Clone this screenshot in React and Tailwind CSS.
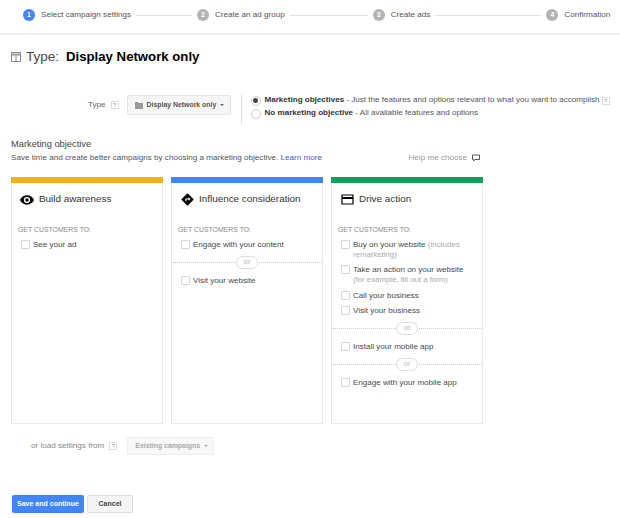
import React from "react";

function Step({ n, label, active }) {
  return (
    <div className="flex items-center shrink-0">
      <span className={`w-[12px] h-[12px] rounded-full flex items-center justify-center text-white text-[7px] font-bold ${active ? "bg-[#4285f4]" : "bg-[#b3b3b3]"}`}>{n}</span>
      <span className="ml-[6px] text-[8.1px] text-[#555] whitespace-nowrap">{label}</span>
    </div>
  );
}

function Line({ w }) {
  return <div className={`h-px bg-[#e3e3e3] ml-[5px] mr-[5px] ${w}`} />;
}

function Help({ className = "" }) {
  return <span className={`inline-flex items-center justify-center w-[8px] h-[8px] border border-[#ddd] text-[6px] leading-none text-[#999] ${className}`}>?</span>;
}

function Check({ label, note, note2, tall }) {
  return (
    <div className={`flex items-start pl-[9px] ${tall ? "mb-[5px]" : "mb-[4px]"}`}>
      <span className="w-[9px] h-[9px] mt-[1px] border border-[#d5d5d5] rounded-[1px] bg-white shrink-0" />
      <div className="ml-[3px] text-[8.05px] leading-[11px] text-[#4a4a4a]">
        <div>
          {label}
          {note && <span className="text-[#aaa]"> {note}</span>}
        </div>
        {note2 && <div className="text-[#aaa] text-[7.8px] leading-[10px]">{note2}</div>}
      </div>
    </div>
  );
}

function Or() {
  return (
    <div className="relative h-[16px] flex items-center justify-center mb-[5px]">
      <div className="absolute left-0 right-0 top-[8px] border-t border-dotted border-[#ccc]" />
      <span className="relative bg-white border border-[#ddd] rounded-full w-[22px] h-[13px] flex items-center justify-center text-[8px] text-[#bbb]">or</span>
    </div>
  );
}

function Card({ bar, icon, title, children }) {
  return (
    <div className="w-[152px] h-[247px] border border-[#e8e8e8] border-t-0 bg-white">
      <div className={`h-[6px] -mx-px ${bar}`} />
      <div className="flex items-center h-[33px] pl-[8px]">
        <span className="w-[14px] h-[14px] flex items-center justify-center text-black">{icon}</span>
        <span className="ml-[5px] text-[9.9px] text-[#333] whitespace-nowrap">{title}</span>
      </div>
      <div className="mt-[9px] pl-[6px] text-[6.9px] leading-[10px] text-[#888]">GET CUSTOMERS TO:</div>
      <div className="mt-[4px]">{children}</div>
    </div>
  );
}

const Eye = (
  <svg width="14" height="10" viewBox="0 0 24 16"><path fill="#000" d="M12 0C6.5 0 2 3.3 0 8c2 4.700 6.500 8 12 8s10-3.300 12-8c-2-4.700-6.500-8-12-8zm0 13.300A5.300 5.300 0 1 1 12 2.700a5.300 5.300 0 0 1 0 10.600zM12 5a3 3 0 1 0 0 6 3 3 0 0 0 0-6z" /></svg>
);
const Diamond = (
  <svg width="13" height="13" viewBox="0 0 24 24"><path fill="#000" d="M22.700 10.900 13.100 1.300a1.500 1.500 0 0 0-2.200 0l-9.600 9.600a1.500 1.500 0 0 0 0 2.200l9.600 9.600a1.500 1.500 0 0 0 2.200 0l9.600-9.600a1.500 1.500 0 0 0 0-2.200zM14 14.500V12h-4v3H8v-4a1 1 0 0 1 1-1h5V7.500l3.500 3.500z" /></svg>
);
const CardIcon = (
  <svg width="13" height="11" viewBox="0 0 13 11"><path fill="none" stroke="#000" strokeWidth="1.200" d="M1 1h11v9H1z" /><path fill="#000" d="M1 3h11v2H1z" /></svg>
);

export default function App() {
  return (
    <div className="w-[620px] h-[518px] bg-white overflow-hidden font-['Liberation_Sans',Arial,sans-serif]">
      <div className="h-[35px] border-b-2 border-[#f0f0f0] flex items-center pl-[23px] pb-[3px]">
        <Step n="1" label="Select campaign settings" active />
        <Line w="w-[56px]" />
        <Step n="2" label="Create an ad group" />
        <Line w="w-[78px]" />
        <Step n="3" label="Create ads" />
        <Line w="w-[106px]" />
        <Step n="4" label="Confirmation" />
      </div>

      <div className="flex items-center mt-[13px] ml-[11px] h-[18px]">
        <svg width="10" height="10" viewBox="0 0 10 10" className="shrink-0">
          <path fill="#ccc" d="M1 1h8v2H1z" />
          <path fill="none" stroke="#888" d="M.5.5h9v9h-9zM.5 3h9M5 3v6.500" />
        </svg>
        <span className="ml-[5px] text-[13.5px] text-[#444]">Type:</span>
        <span className="ml-[7px] text-[13.2px] font-bold text-black">Display Network only</span>
      </div>

      <div className="flex items-start mt-[29px]">
        <div className="flex items-center h-[20px] ml-[88px]">
          <span className="text-[8.1px] text-[#666]">Type</span>
          <Help className="ml-[5px]" />
          <div className="ml-[8px] w-[104px] h-[20px] bg-[#f5f5f5] border border-[#e5e5e5] rounded-[2px] flex items-center pl-[7px]">
            <svg width="8" height="7" viewBox="0 0 8 7" className="shrink-0"><path fill="#999" d="M0 0h3v1h5v6H0z" /></svg>
            <span className="ml-[4px] text-[6.9px] font-bold text-[#555] whitespace-nowrap">Display Network only</span>
            <span className="ml-[4px] border-x-[2px] border-x-transparent border-t-[2px] border-t-[#666]" />
          </div>
        </div>
        <div className="ml-[10px] w-px h-[29px] bg-[#ddd]" />
        <div className="ml-[9px] -mt-[1px] text-[8.05px] text-[#555]">
          <div className="flex items-center h-[13px]">
            <span className="w-[10px] h-[10px] rounded-full border border-[#ccc] flex items-center justify-center shrink-0">
              <span className="w-[5px] h-[5px] rounded-full bg-[#444]" />
            </span>
            <span className="ml-[4px] whitespace-nowrap"><b className="text-[#333]">Marketing objectives</b> - Just the features and options relevant to what you want to accomplish</span>
            <Help className="ml-[2px] shrink-0" />
          </div>
          <div className="flex items-center h-[13px]">
            <span className="w-[10px] h-[10px] rounded-full border border-[#ccc] shrink-0" />
            <span className="ml-[4px] whitespace-nowrap"><b className="text-[#333]">No marketing objective</b> - All available features and options</span>
          </div>
        </div>
      </div>

      <div className="ml-[11px] mt-[14px] text-[9.3px] leading-[12px] text-[#444]">Marketing objective</div>
      <div className="ml-[11px] mr-[140px] mt-[2px] h-[12px] flex items-center justify-between text-[8.1px] text-[#555] whitespace-nowrap">
        <span>Save time and create better campaigns by choosing a marketing objective. <span className="text-[#3b5fc4]">Learn more</span></span>
        <span className="flex items-center text-[#999]">
          Help me choose
          <svg width="8" height="8" viewBox="0 0 8 8" className="ml-[5px]"><path fill="none" stroke="#555" d="M.5 1h7v4.500H3L1.500 7V5.500h-1z" /></svg>
        </span>
      </div>

      <div className="flex gap-[8px] ml-[11px] mt-[13px]">
        <Card bar="bg-[#f4b01a]" icon={Eye} title="Build awareness">
          <Check label="See your ad" />
        </Card>
        <Card bar="bg-[#4285f4]" icon={Diamond} title="Influence consideration">
          <Check label="Engage with your content" />
          <Or />
          <Check label="Visit your website" />
        </Card>
        <Card bar="bg-[#0f9d58]" icon={CardIcon} title="Drive action">
          <Check label="Buy on your website" note="(includes" note2="remarketing)" />
          <Check label="Take an action on your website" note2="(for example, fill out a form)" tall />
          <Check label="Call your business" />
          <Check label="Visit your business" />
          <Or />
          <Check label="Install your mobile app" />
          <Or />
          <Check label="Engage with your mobile app" />
        </Card>
      </div>

      <div className="flex items-center ml-[31px] mt-[13px] h-[18px]">
        <span className="text-[8.1px] text-[#888] whitespace-nowrap">or load settings from</span>
        <Help className="ml-[5px]" />
        <div className="ml-[10px] w-[87px] h-[18px] bg-[#f8f8f8] border border-[#eee] rounded-[2px] flex items-center pl-[7px]">
          <span className="text-[6.9px] font-bold text-[#aaa] whitespace-nowrap">Existing campaigns</span>
          <span className="ml-[4px] border-x-[2px] border-x-transparent border-t-[2px] border-t-[#aaa]" />
        </div>
      </div>

      <div className="flex items-center ml-[12px] mt-[40px]">
        <div className="w-[72px] h-[18px] bg-[#4285f4] rounded-[2px] flex items-center justify-center text-white text-[7px] font-bold whitespace-nowrap">Save and continue</div>
        <div className="ml-[3px] w-[46px] h-[18px] bg-[#f5f5f5] border border-[#ddd] rounded-[2px] flex items-center justify-center text-[#444] text-[7px] font-bold">Cancel</div>
      </div>
    </div>
  );
}
